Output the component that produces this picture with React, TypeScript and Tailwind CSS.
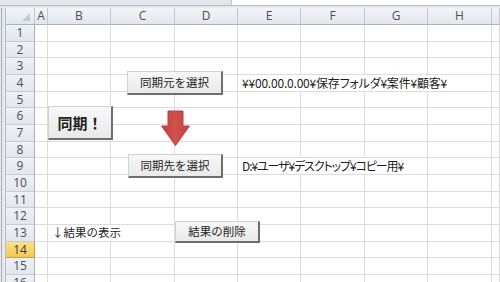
import React from "react";

const FONT = '"Noto Sans CJK JP", "Noto Sans", sans-serif';

const colWidths = [29, 13, 63, 64, 63, 63, 64, 63, 64, 8];
const colLetters = ["", "A", "B", "C", "D", "E", "F", "G", "H", ""];
const rowHeights = [17, 16, 17, 17, 16, 17, 17, 16, 17, 17, 16, 17, 17, 16, 17, 17];

type Merge = { start: number; end: number; text: string; pl: number; cls: string };
const merges: Record<number, Merge> = {
  4: {
    start: 5,
    end: 8,
    text: "¥¥00.00.0.00¥保存フォルダ¥案件¥顧客¥",
    pl: 4,
    cls: "text-[12px] tracking-[-0.2px] [font-feature-settings:'palt']",
  },
  9: {
    start: 5,
    end: 7,
    text: "D:¥ユーザ¥デスクトップ¥コピー用¥",
    pl: 4,
    cls: "text-[12px] tracking-[-1.1px] [font-feature-settings:'palt']",
  },
  13: { start: 2, end: 3, text: "↓結果の表示", pl: 4, cls: "text-[11.5px]" },
};

function HeaderRow() {
  return (
    <div className="flex h-[17px]">
      {colWidths.map((w, i) => (
        <div
          key={i}
          style={{ width: w }}
          className="relative flex shrink-0 items-center justify-center border-b border-r border-b-[#a9b1bb] border-r-[#c3c8cf] bg-gradient-to-b from-[#f3f5f8] to-[#e3e7ec] text-[12px] leading-none text-[#4a4f56]"
        >
          {i === 0 ? (
            <svg width="8" height="8" viewBox="0 0 8 8" className="absolute bottom-[3px] right-[4px]">
              <polygon points="8,0 8,8 0,8" fill="#c5cad1" />
            </svg>
          ) : (
            <span style={{ fontFamily: '"Open Sans", "Noto Sans", sans-serif' }}>{colLetters[i]}</span>
          )}
        </div>
      ))}
    </div>
  );
}

function SheetRow({ r, h }: { r: number; h: number }) {
  const m = merges[r];
  const cells: React.ReactNode[] = [];
  const selected = r === 14;
  cells.push(
    <div
      key="h"
      style={{ width: colWidths[0], fontFamily: '"Open Sans", "Noto Sans", sans-serif' }}
      className={
        selected
          ? "flex shrink-0 items-center justify-center border-b border-r border-b-[#c9a13a] border-r-[#c9a13a] bg-gradient-to-b from-[#fbe08a] to-[#f5c850] text-[12px] leading-none text-[#3b3b3b]"
          : "flex shrink-0 items-center justify-center border-b border-r border-b-[#c8ccd2] border-r-[#a9b1bb] bg-gradient-to-b from-[#eef1f5] to-[#e3e7ec] text-[12px] leading-none text-[#4a4f56]"
      }
    >
      {r}
    </div>
  );
  let i = 1;
  while (i < colWidths.length) {
    if (m && i === m.start) {
      let w = 0;
      for (let j = m.start; j <= m.end; j++) w += colWidths[j];
      cells.push(
        <div
          key={i}
          style={{ width: w, paddingLeft: m.pl, fontFamily: FONT }}
          className={
            "flex shrink-0 items-center whitespace-nowrap border-b border-r border-[#dadcdf] bg-white leading-none text-[#1e1e1e] " +
            m.cls
          }
        >
          {m.text}
        </div>
      );
      i = m.end + 1;
    } else {
      cells.push(
        <div
          key={i}
          style={{ width: colWidths[i] }}
          className="shrink-0 border-b border-r border-[#dadcdf] bg-white"
        />
      );
      i++;
    }
  }
  return (
    <div className="flex" style={{ height: h }}>
      {cells}
    </div>
  );
}

function Button({
  left,
  top,
  w,
  h,
  children,
  bold,
}: {
  left: number;
  top: number;
  w: number;
  h: number;
  children: React.ReactNode;
  bold?: boolean;
}) {
  return (
    <div
      style={{ left, top, width: w, height: h, fontFamily: FONT }}
      className={
        "absolute flex items-center justify-center border border-[#d2d2d2] border-b-2 border-r-2 border-b-[#6e6e6e] border-r-[#6e6e6e] bg-gradient-to-b from-[#f8f8f8] to-[#e9e9e9] leading-none text-[#222] " +
        (bold ? "text-[15px] font-bold" : "text-[11.5px]")
      }
    >
      {children}
    </div>
  );
}

export default function App() {
  return (
    <div className="relative h-[282px] w-[500px] overflow-hidden bg-white">
      {/* top strip */}
      <div className="flex h-[8px] flex-col">
        <div className="flex h-[5px]">
          <div className="h-full w-[232px] border-r border-[#c2c7ce] bg-[#e3e6ea]" />
          <div className="h-full flex-1 bg-white" />
        </div>
        <div className="h-[1px] bg-[#b4bac3]" />
        <div className="h-[2px] bg-[#e6e9ed]" />
      </div>
      <div className="flex">
        {/* left strip */}
        <div className="flex w-[6px] shrink-0 self-stretch">
          <div className="w-[1px] bg-[#e8eaed]" />
          <div className="w-[1px] bg-[#a9aeb5]" />
          <div className="w-[3px] bg-[#e6e9ed]" />
          <div className="w-[1px] bg-[#b9bec6]" />
        </div>
        <div className="flex flex-col">
          <HeaderRow />
          {rowHeights.map((h, idx) => (
            <SheetRow key={idx} r={idx + 1} h={h} />
          ))}
        </div>
      </div>

      <Button left={127} top={71} w={96} h={24}>
        同期元を選択
      </Button>
      <Button left={48} top={106} w={65} h={34} bold>
        同期！
      </Button>
      <Button left={128} top={154} w={95} h={24}>
        同期先を選択
      </Button>
      <Button left={175} top={221} w={85} h={22}>
        結果の削除
      </Button>

      <svg className="absolute" style={{ left: 161, top: 110 }} width="30" height="37" viewBox="0 0 30 37">
        <defs>
          <linearGradient id="rg" x1="0" y1="0" x2="1" y2="0">
            <stop offset="0" stopColor="#c2413e" />
            <stop offset="0.5" stopColor="#d0504c" />
            <stop offset="1" stopColor="#c2413e" />
          </linearGradient>
        </defs>
        <polygon
          points="7,1 22,1 22,16 28.5,16 14.5,35.5 0.5,16 7,16"
          fill="url(#rg)"
          stroke="#b9403d"
          strokeWidth="1"
        />
      </svg>
    </div>
  );
}
